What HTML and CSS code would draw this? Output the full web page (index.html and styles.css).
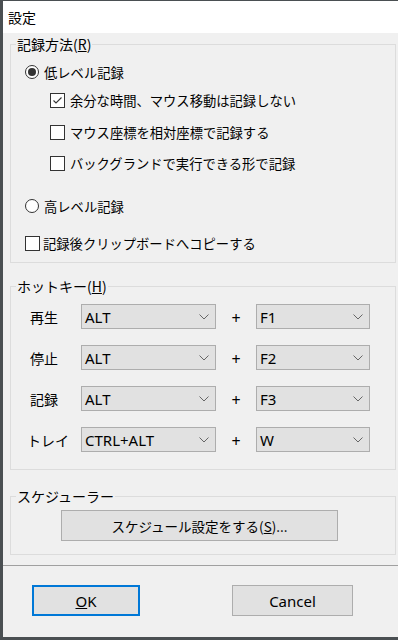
FILE: index.html
```html
<!DOCTYPE html>
<html lang="ja">
<head>
<meta charset="utf-8">
<title>設定</title>
<link rel="stylesheet" href="styles.css">
</head>
<body>
<div class="window">
  <div class="titlebar">設定</div>
  <div class="content">
    <fieldset class="group group-method">
      <legend class="legend">記録方法(<u>R</u>)</legend>
      <div class="group-body method-body">
        <label class="row row-r1"><span class="radio checked"></span><span class="txt">低レベル記録</span></label>
        <label class="row row-c1 sub"><span class="check checked"><svg viewBox="0 0 15 15" width="15" height="15"><path d="M3.5 7.5 L6 10 L11.5 4.5" fill="none" stroke="#333" stroke-width="1.1"/></svg></span><span class="txt">余分な時間、マウス移動は記録しない</span></label>
        <label class="row row-c2 sub"><span class="check"></span><span class="txt">マウス座標を相対座標で記録する</span></label>
        <label class="row row-c3 sub"><span class="check"></span><span class="txt">バックグランドで実行できる形で記録</span></label>
        <label class="row row-r2"><span class="radio"></span><span class="txt">高レベル記録</span></label>
        <label class="row row-c4"><span class="check"></span><span class="txt">記録後クリップボードへコピーする</span></label>
      </div>
    </fieldset>

    <fieldset class="group group-hotkey">
      <legend class="legend">ホットキー(<u>H</u>)</legend>
      <div class="group-body hotkey-body">
        <div class="hk-row">
          <span class="hk-label">再生</span>
          <div class="combo combo-mod"><span class="combo-text">ALT</span><svg class="chev" viewBox="0 0 10 6" width="10" height="6"><path d="M0.5 0.5 L5 5 L9.5 0.5" fill="none" stroke="#666" stroke-width="1"/></svg></div>
          <span class="plus">+</span>
          <div class="combo combo-key"><span class="combo-text">F1</span><svg class="chev" viewBox="0 0 10 6" width="10" height="6"><path d="M0.5 0.5 L5 5 L9.5 0.5" fill="none" stroke="#666" stroke-width="1"/></svg></div>
        </div>
        <div class="hk-row">
          <span class="hk-label">停止</span>
          <div class="combo combo-mod"><span class="combo-text">ALT</span><svg class="chev" viewBox="0 0 10 6" width="10" height="6"><path d="M0.5 0.5 L5 5 L9.5 0.5" fill="none" stroke="#666" stroke-width="1"/></svg></div>
          <span class="plus">+</span>
          <div class="combo combo-key"><span class="combo-text">F2</span><svg class="chev" viewBox="0 0 10 6" width="10" height="6"><path d="M0.5 0.5 L5 5 L9.5 0.5" fill="none" stroke="#666" stroke-width="1"/></svg></div>
        </div>
        <div class="hk-row">
          <span class="hk-label">記録</span>
          <div class="combo combo-mod"><span class="combo-text">ALT</span><svg class="chev" viewBox="0 0 10 6" width="10" height="6"><path d="M0.5 0.5 L5 5 L9.5 0.5" fill="none" stroke="#666" stroke-width="1"/></svg></div>
          <span class="plus">+</span>
          <div class="combo combo-key"><span class="combo-text">F3</span><svg class="chev" viewBox="0 0 10 6" width="10" height="6"><path d="M0.5 0.5 L5 5 L9.5 0.5" fill="none" stroke="#666" stroke-width="1"/></svg></div>
        </div>
        <div class="hk-row">
          <span class="hk-label hk-tray">トレイ</span>
          <div class="combo combo-mod"><span class="combo-text">CTRL+ALT</span><svg class="chev" viewBox="0 0 10 6" width="10" height="6"><path d="M0.5 0.5 L5 5 L9.5 0.5" fill="none" stroke="#666" stroke-width="1"/></svg></div>
          <span class="plus">+</span>
          <div class="combo combo-key"><span class="combo-text">W</span><svg class="chev" viewBox="0 0 10 6" width="10" height="6"><path d="M0.5 0.5 L5 5 L9.5 0.5" fill="none" stroke="#666" stroke-width="1"/></svg></div>
        </div>
      </div>
    </fieldset>

    <fieldset class="group group-sched">
      <legend class="legend">スケジューラー</legend>
      <div class="group-body sched-body">
        <button class="btn btn-sched" type="button">スケジュール設定をする(<u>S</u>)...</button>
      </div>
    </fieldset>
  </div>
  <div class="footer">
    <button class="btn btn-ok" type="button"><u>O</u>K</button>
    <button class="btn btn-cancel" type="button">Cancel</button>
  </div>
</div>
</body>
</html>
```
FILE: styles.css
```css
* { box-sizing: border-box; }
html, body { margin: 0; padding: 0; }
body {
  width: 398px;
  height: 640px;
  overflow: hidden;
  background: #4a4f52;
  font-family: "Noto Sans CJK JP", "Noto Sans", sans-serif;
  color: #000;
}
.window {
  margin: 1px 0 0 3px;
  width: 395px;
  height: 636px;
  background: #f0f0f0;
  display: flex;
  flex-direction: column;
}
.titlebar {
  height: 32px;
  background: #fff;
  font-size: 14px;
  line-height: 32px;
  padding-left: 5px;
}
.content {
  padding: 1px 2px 0 7px;
}
.group {
  margin: 0;
  padding: 0;
  border: 1px solid #dcdcdc;
  min-width: 0;
}
.legend {
  margin-left: 5px;
  padding: 0 1px;
  font-size: 14px;
  line-height: 20px;
  height: 20px;
}
.group-body {
  display: flex;
  flex-direction: column;
}
.method-body {
  padding: 6px 0 7px 14px;
}
.row {
  display: flex;
  align-items: center;
  height: 24px;
  font-size: 13.3px;
  gap: 5px;
}
.row.sub { margin-left: 25px; }
.row-c1 { margin-top: 4px; }
.row-c2 { margin-top: 8px; }
.row-c3 { margin-top: 7px; }
.row-r2 { margin-top: 19px; }
.row-c4 { margin-top: 13px; }
.row-c4 { gap: 3px; }
.radio {
  width: 14px;
  height: 14px;
  border: 1px solid #333;
  border-radius: 50%;
  background: #fff;
  display: flex;
  align-items: center;
  justify-content: center;
  flex: none;
}
.radio.checked::after {
  content: "";
  width: 8px;
  height: 8px;
  border-radius: 50%;
  background: #333;
}
.check {
  width: 15px;
  height: 15px;
  border: 1px solid #333;
  background: #fff;
  flex: none;
  display: flex;
}
.check svg { margin: -1px; }
.txt { white-space: nowrap; }

.group-hotkey { margin-top: 13px; }
.hotkey-body {
  padding: 8px 0 17px 0;
  gap: 16px;
}
.hk-row {
  display: flex;
  align-items: center;
  height: 25px;
}
.hk-label {
  width: 70px;
  padding-left: 19px;
  font-size: 14px;
}
.hk-tray { padding-left: 16px; }
.combo {
  height: 25px;
  background: #e1e1e1;
  border: 1px solid #adadad;
  display: flex;
  align-items: center;
  justify-content: space-between;
  padding: 0 6px 0 3px;
  font-family: "Noto Sans", "Open Sans", sans-serif;
  font-size: 15px;
}
.combo-text { line-height: 20px; }
.combo-mod { width: 135px; }
.combo-key { width: 114px; }
.chev { flex: none; }
.plus {
  width: 40px;
  text-align: center;
  font-family: "Noto Sans", sans-serif;
  font-size: 16px;
  padding-top: 2px;
}

.group-sched { margin-top: 16px; }
.sched-body {
  padding: 4px 0 13px 50px;
}
.btn {
  margin: 0;
  font-family: "Noto Sans CJK JP", "Noto Sans", sans-serif;
  background: #e1e1e1;
  border: 1px solid #adadad;
  color: #000;
  padding: 0;
}
.btn-sched {
  width: 277px;
  height: 31px;
  font-size: 13.5px;
}
.footer {
  margin-top: 10px;
  border-top: 1px solid #a0a0a0;
  display: flex;
  padding: 19px 0 0 29px;
}
.btn-ok {
  width: 108px;
  height: 31px;
  border: 2px solid #0078d7;
  font-family: "Noto Sans", sans-serif;
  font-size: 15px;
}
.btn-cancel {
  margin-left: 92px;
  width: 121px;
  height: 31px;
  font-family: "Noto Sans", sans-serif;
  font-size: 15px;
}
```
